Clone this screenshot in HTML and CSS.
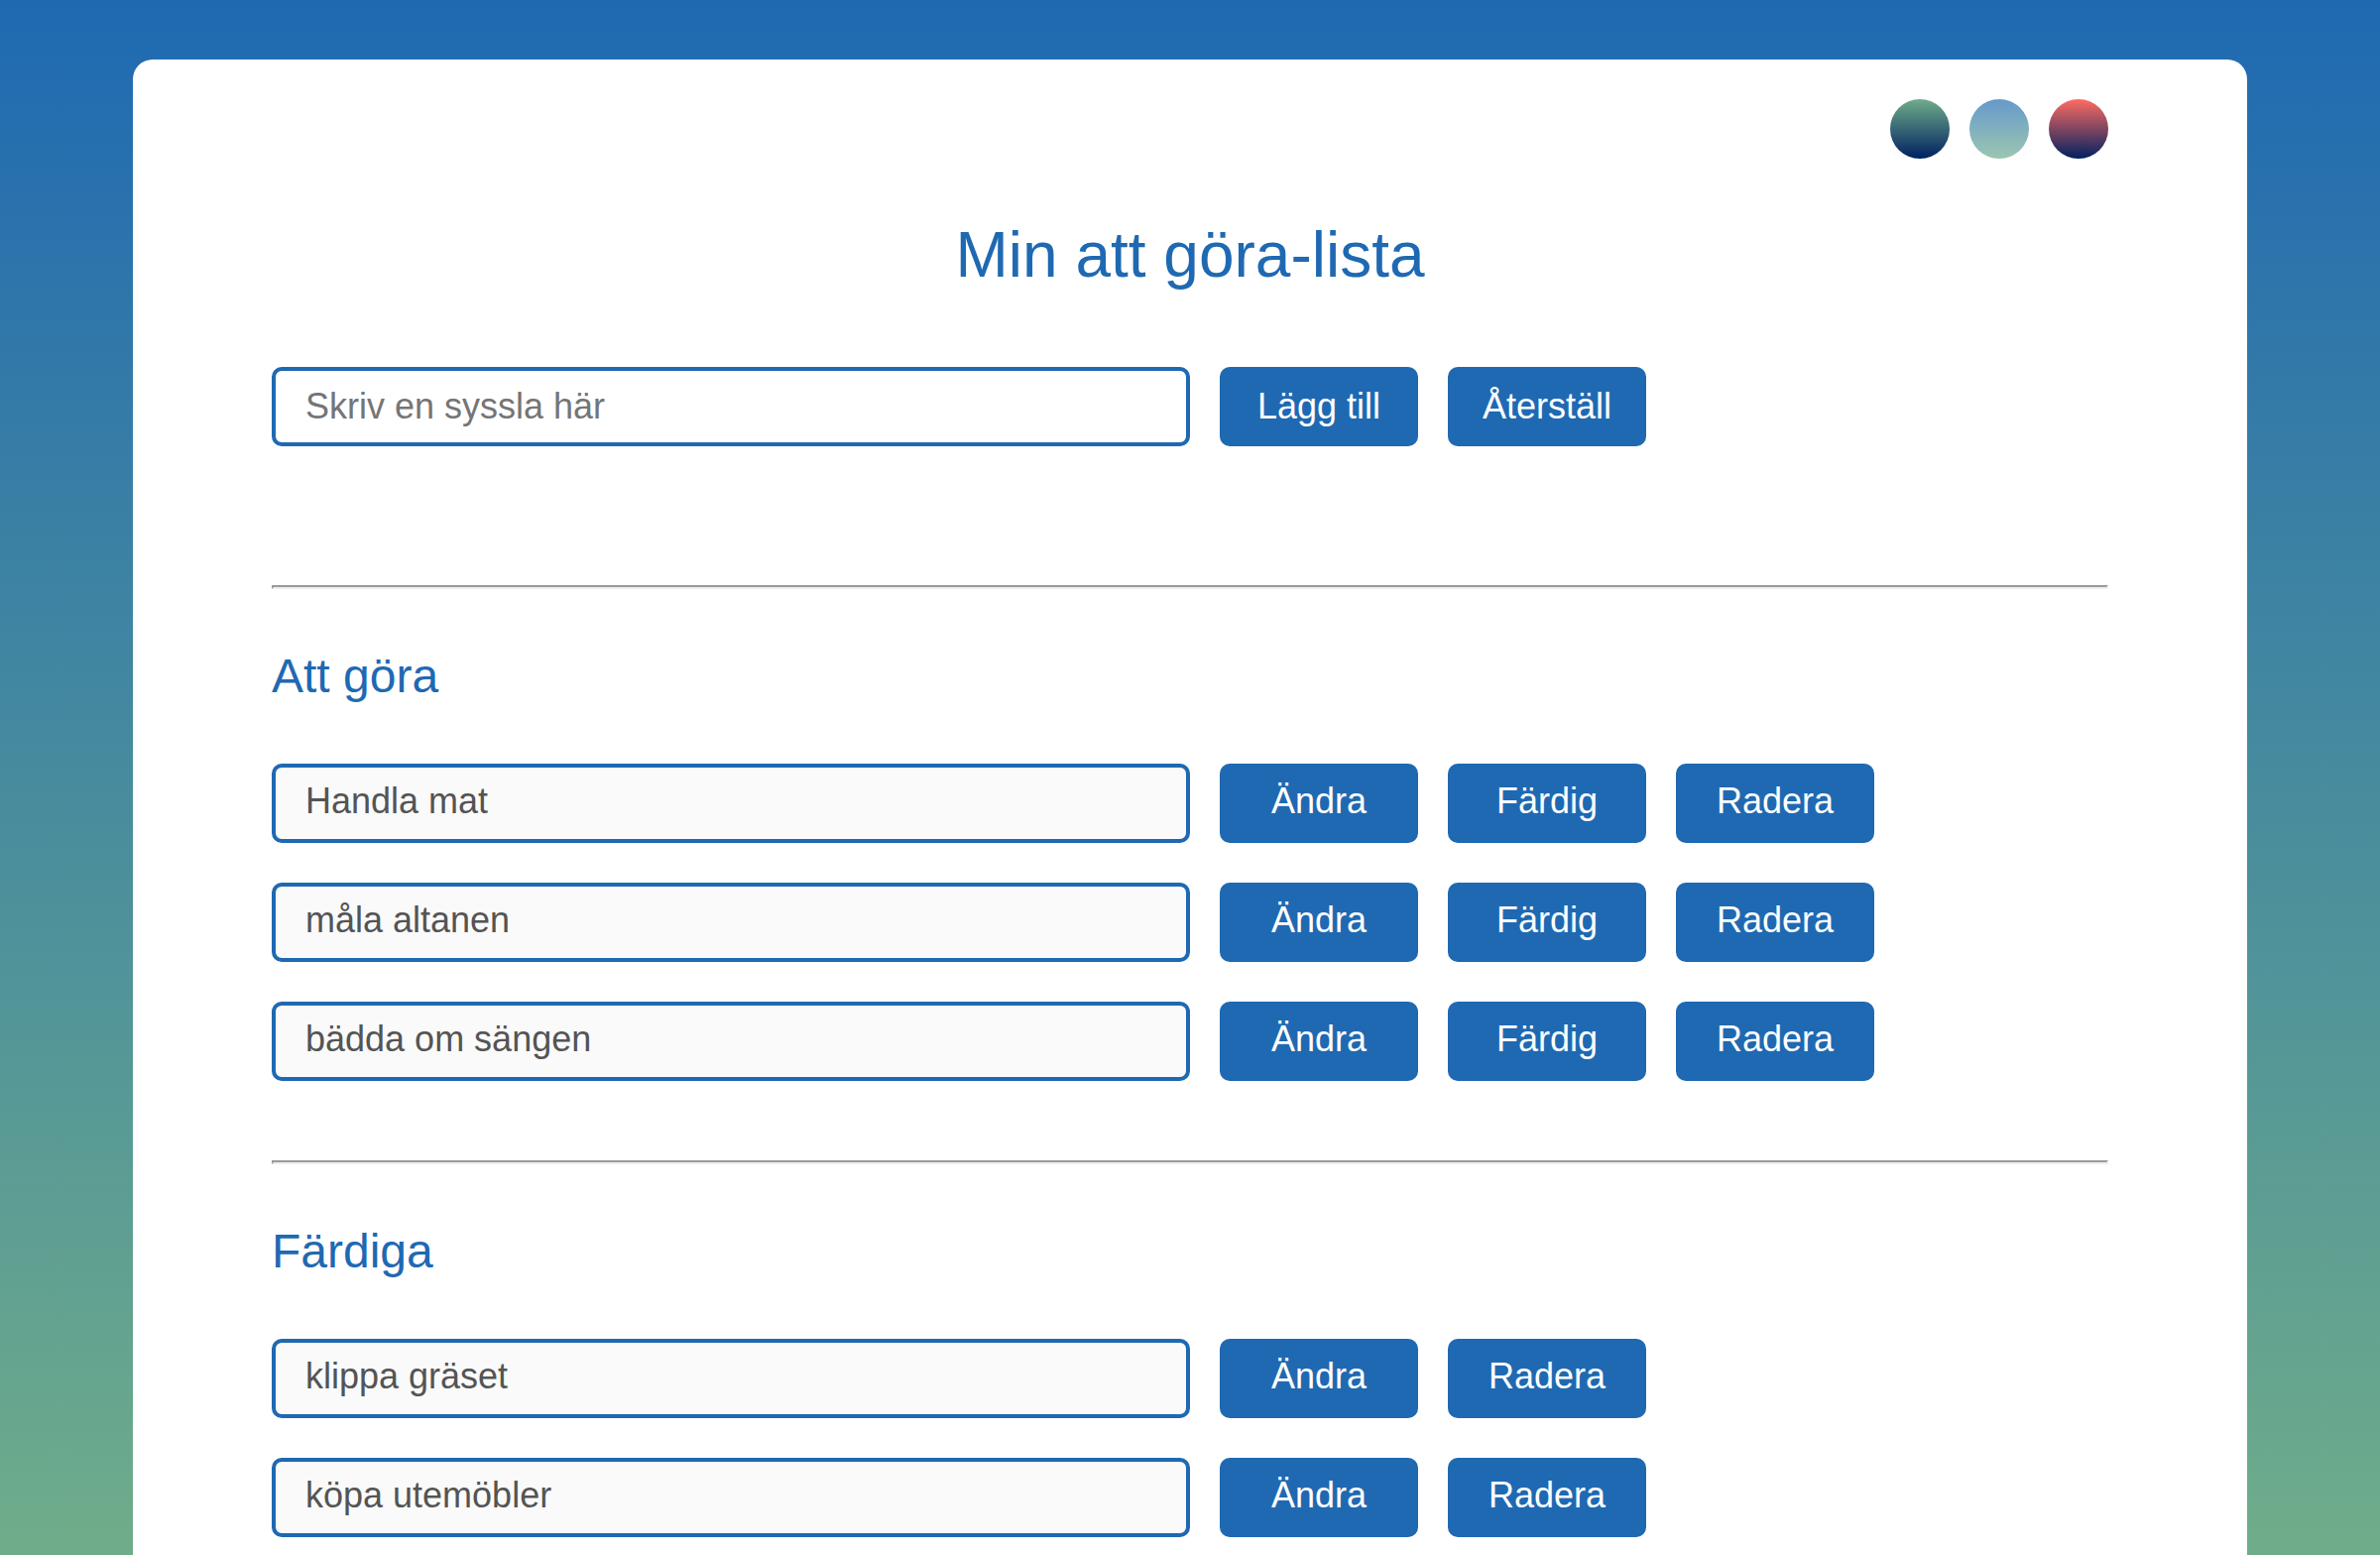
FILE: index.html
```html
<!DOCTYPE html>
<html lang="sv">
<head>
  <meta charset="utf-8">
  <meta name="viewport" content="width=device-width, initial-scale=1">
  <title>Min att göra-lista</title>
  <link rel="stylesheet" href="styles.css">
</head>
<body>
  <main class="card">
    <div class="themes">
      <button type="button" class="theme theme-forest" aria-label="Tema skog"></button>
      <button type="button" class="theme theme-sky" aria-label="Tema himmel"></button>
      <button type="button" class="theme theme-sunset" aria-label="Tema solnedgång"></button>
    </div>

    <h1 class="title">Min att göra-lista</h1>

    <form class="row">
      <input class="field" type="text" placeholder="Skriv en syssla här" aria-label="Ny syssla">
      <button class="btn" type="button">Lägg till</button>
      <button class="btn" type="reset">Återställ</button>
    </form>

    <hr class="divider divider-form">

    <section>
      <h2 class="heading">Att göra</h2>
      <ul class="tasks">
        <li class="row">
          <input class="field" type="text" value="Handla mat" aria-label="Syssla" disabled>
          <button class="btn" type="button">Ändra</button>
          <button class="btn" type="button">Färdig</button>
          <button class="btn" type="button">Radera</button>
        </li>
        <li class="row">
          <input class="field" type="text" value="måla altanen" aria-label="Syssla" disabled>
          <button class="btn" type="button">Ändra</button>
          <button class="btn" type="button">Färdig</button>
          <button class="btn" type="button">Radera</button>
        </li>
        <li class="row">
          <input class="field" type="text" value="bädda om sängen" aria-label="Syssla" disabled>
          <button class="btn" type="button">Ändra</button>
          <button class="btn" type="button">Färdig</button>
          <button class="btn" type="button">Radera</button>
        </li>
      </ul>
    </section>

    <hr class="divider">

    <section>
      <h2 class="heading">Färdiga</h2>
      <ul class="tasks">
        <li class="row">
          <input class="field" type="text" value="klippa gräset" aria-label="Färdig syssla" disabled>
          <button class="btn" type="button">Ändra</button>
          <button class="btn" type="button">Radera</button>
        </li>
        <li class="row">
          <input class="field" type="text" value="köpa utemöbler" aria-label="Färdig syssla" disabled>
          <button class="btn" type="button">Ändra</button>
          <button class="btn" type="button">Radera</button>
        </li>
      </ul>
    </section>
  </main>
</body>
</html>
```

FILE: styles.css
```css
:root {
  --blue: #1f69b2;
  --green: #6fad8a;
  --navy: #002060;
}

* {
  box-sizing: border-box;
}

body {
  display: flex;
  flex-direction: column;
  min-height: 100vh;
  margin: 0;
  padding: 60px 134px 0;
  background: linear-gradient(var(--blue), var(--green));
  font-family: Arial, "Liberation Sans", sans-serif;
  font-size: 36px;
}

.card {
  flex: 1;
  padding: 40px 140px 18px;
  border-radius: 20px 20px 0 0;
  background: #fff;
}

.themes {
  display: flex;
  justify-content: flex-end;
  gap: 20px;
}

.theme {
  width: 60px;
  height: 60px;
  padding: 0;
  border: 0;
  border-radius: 50%;
  cursor: pointer;
}

.theme-forest {
  background: linear-gradient(var(--green), var(--navy));
}

.theme-sky {
  background: linear-gradient(#6699cc, #9bc7af);
}

.theme-sunset {
  background: linear-gradient(#ff6b62, var(--navy));
}

.title {
  margin: 60px 0 76px;
  color: var(--blue);
  font-size: 64px;
  font-weight: 400;
  line-height: 74px;
  text-align: center;
}

.heading {
  margin: 60px 0;
  color: var(--blue);
  font-size: 48px;
  font-weight: 400;
  line-height: 56px;
}

.row {
  display: flex;
  gap: 30px;
}

.field {
  width: 50%;
  height: 80px;
  padding: 0 30px;
  border: 4px solid var(--blue);
  border-radius: 10px;
  background: #fff;
  font: inherit;
}

.field::placeholder {
  color: #757575;
}

.field:disabled {
  background: #fafafa;
  color: #545454;
}

.btn {
  width: 200px;
  height: 80px;
  padding: 0;
  border: 0;
  border-radius: 10px;
  background: var(--blue);
  color: #fff;
  font: inherit;
  cursor: pointer;
}

.tasks {
  display: flex;
  flex-direction: column;
  gap: 40px;
  margin: 0;
  padding: 0;
  list-style: none;
}

.tasks .field {
  padding-bottom: 4px;
}

.tasks .btn {
  padding-bottom: 4px;
}

.divider {
  margin: 80px 0 60px;
  border: 2px inset;
}

.divider-form {
  margin-top: 140px;
}
```
